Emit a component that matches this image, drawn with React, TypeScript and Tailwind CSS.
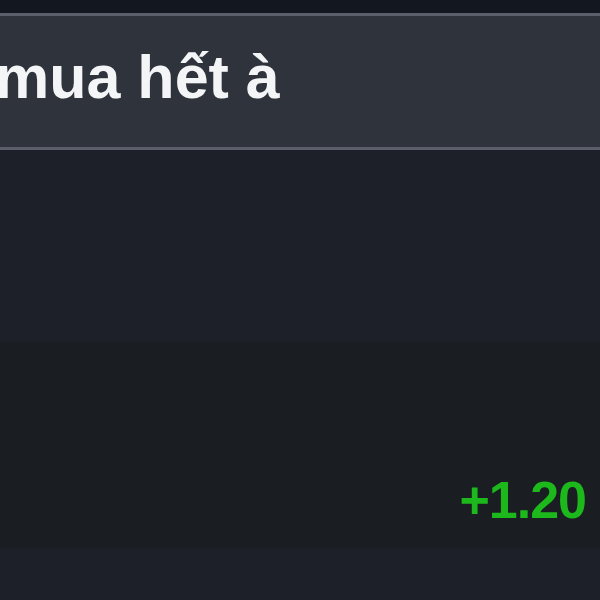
export default function App() {
  return (
    <div className="w-[600px] h-[600px] overflow-hidden bg-[#1d2029] flex flex-col" style={{ fontFamily: '"Liberation Sans", Arial, sans-serif' }}>
      {/* Top strip */}
      <div className="h-[13px] bg-[#131820] shrink-0"></div>

      {/* Title bar */}
      <div className="h-[137px] shrink-0 bg-[#2f333c] border-y-[3px] border-[#5a5f69] flex items-center overflow-hidden">
        <h1 className="-ml-[5px] text-[61px] leading-none font-bold text-[#f4f5f7] whitespace-nowrap pb-[9px]">
          mua hết à
        </h1>
      </div>

      {/* Empty area */}
      <div className="h-[192px] shrink-0 bg-[#1d2029]"></div>

      {/* Score row */}
      <div className="h-[206px] shrink-0 bg-[#1a1d21] flex items-end justify-end pr-[14px] pb-[22px]">
        <span className="text-[52px] leading-none font-bold text-[#1cb81c] tracking-[-1px]">+1.20</span>
      </div>

      <div className="flex-1 bg-[#1d2029]"></div>
    </div>
  );
}
